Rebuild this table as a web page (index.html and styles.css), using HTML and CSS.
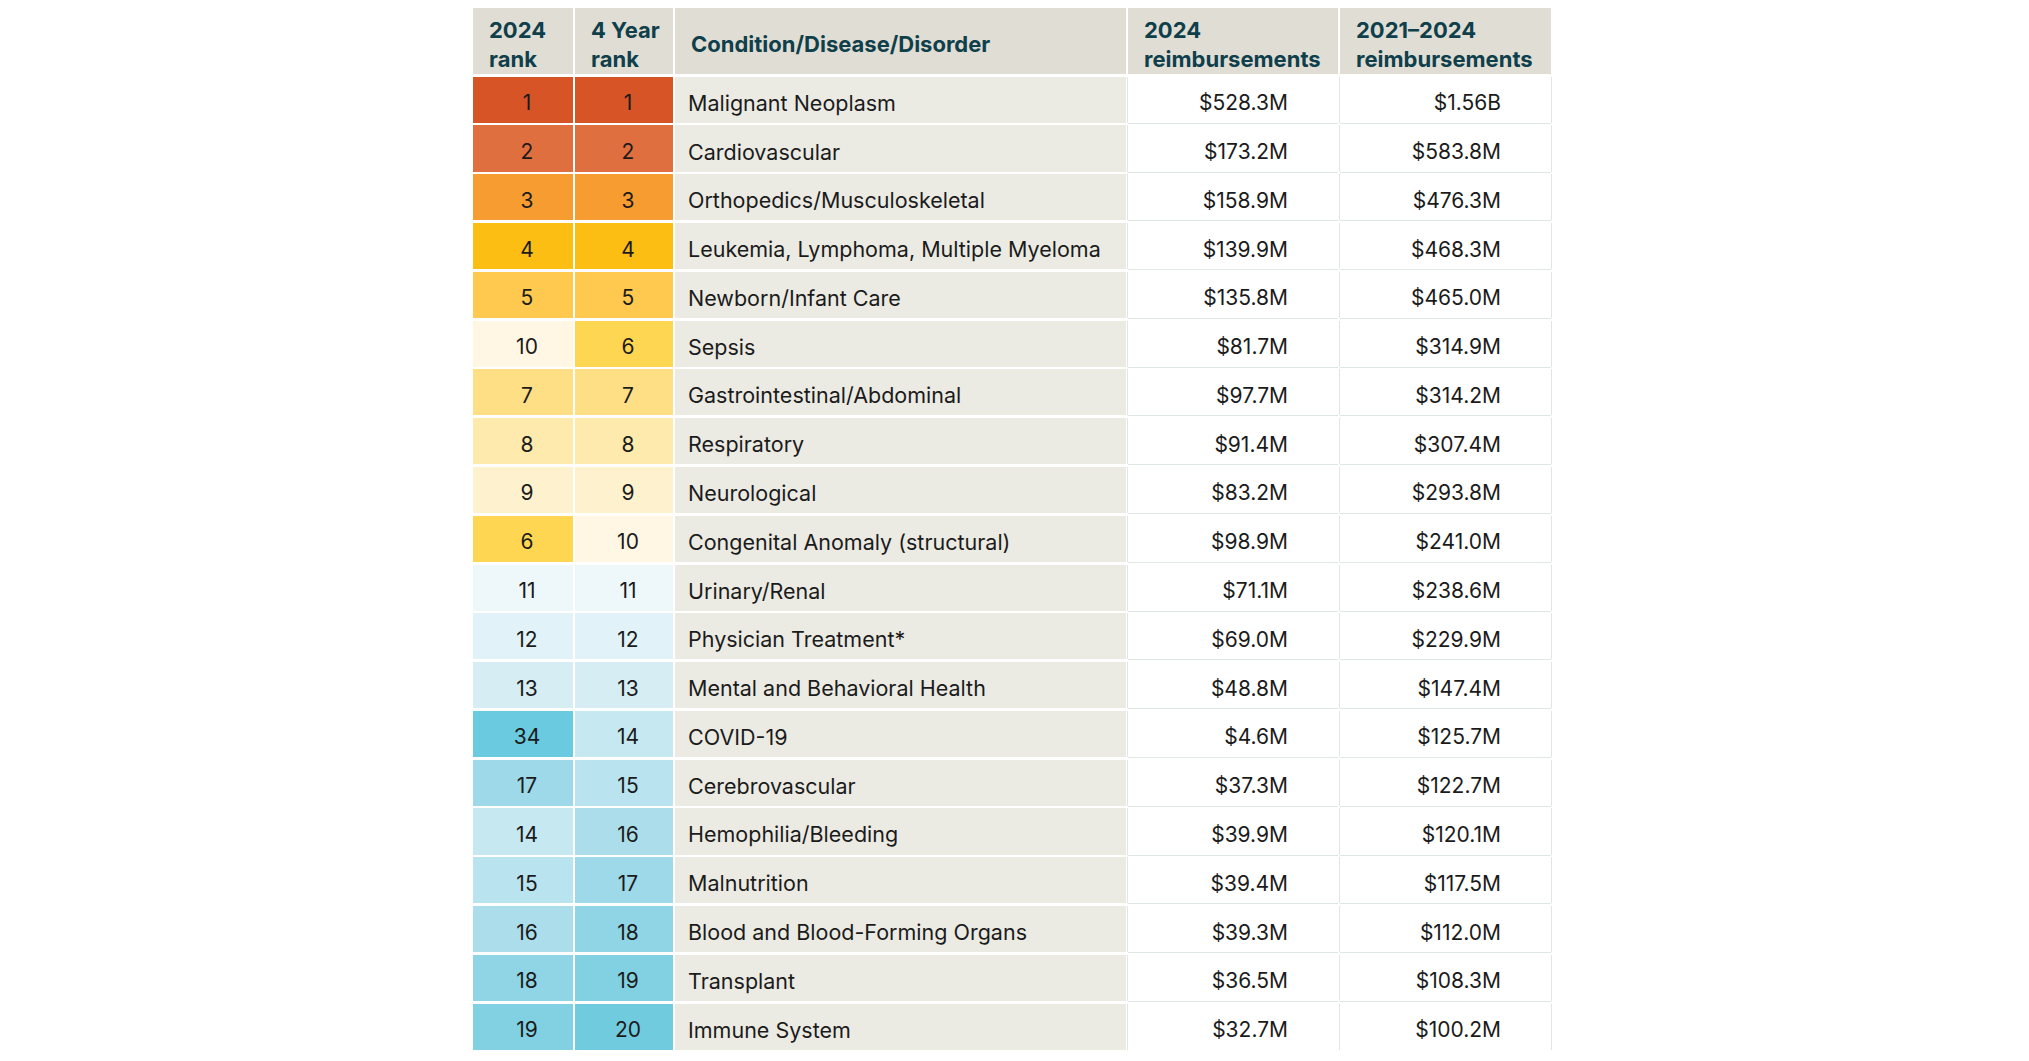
FILE: index.html
```html
<!DOCTYPE html>
<html lang="en">
<head>
<meta charset="utf-8">
<title>Top conditions by reimbursements</title>
<link rel="stylesheet" href="styles.css">
</head>
<body>
<div class="page">
  <div class="table">
    <div class="th th-rank">2024<br>rank</div>
    <div class="th th-rank">4 Year<br>rank</div>
    <div class="th th-cond">Condition/Disease/Disorder</div>
    <div class="th th-val">2024<br>reimbursements</div>
    <div class="th th-val">2021–2024<br>reimbursements</div>

    <div class="rank r1">1</div><div class="rank r1">1</div><div class="cond">Malignant Neoplasm</div><div class="val">$528.3M</div><div class="val last">$1.56B</div>
    <div class="rank r2">2</div><div class="rank r2">2</div><div class="cond">Cardiovascular</div><div class="val">$173.2M</div><div class="val last">$583.8M</div>
    <div class="rank r3">3</div><div class="rank r3">3</div><div class="cond">Orthopedics/Musculoskeletal</div><div class="val">$158.9M</div><div class="val last">$476.3M</div>
    <div class="rank r4">4</div><div class="rank r4">4</div><div class="cond">Leukemia, Lymphoma, Multiple Myeloma</div><div class="val">$139.9M</div><div class="val last">$468.3M</div>
    <div class="rank r5">5</div><div class="rank r5">5</div><div class="cond">Newborn/Infant Care</div><div class="val">$135.8M</div><div class="val last">$465.0M</div>
    <div class="rank r10">10</div><div class="rank r6">6</div><div class="cond">Sepsis</div><div class="val">$81.7M</div><div class="val last">$314.9M</div>
    <div class="rank r7">7</div><div class="rank r7">7</div><div class="cond">Gastrointestinal/Abdominal</div><div class="val">$97.7M</div><div class="val last">$314.2M</div>
    <div class="rank r8">8</div><div class="rank r8">8</div><div class="cond">Respiratory</div><div class="val">$91.4M</div><div class="val last">$307.4M</div>
    <div class="rank r9">9</div><div class="rank r9">9</div><div class="cond">Neurological</div><div class="val">$83.2M</div><div class="val last">$293.8M</div>
    <div class="rank r6">6</div><div class="rank r10">10</div><div class="cond">Congenital Anomaly (structural)</div><div class="val">$98.9M</div><div class="val last">$241.0M</div>
    <div class="rank r11">11</div><div class="rank r11">11</div><div class="cond">Urinary/Renal</div><div class="val">$71.1M</div><div class="val last">$238.6M</div>
    <div class="rank r12">12</div><div class="rank r12">12</div><div class="cond">Physician Treatment*</div><div class="val">$69.0M</div><div class="val last">$229.9M</div>
    <div class="rank r13">13</div><div class="rank r13">13</div><div class="cond">Mental and Behavioral Health</div><div class="val">$48.8M</div><div class="val last">$147.4M</div>
    <div class="rank r34">34</div><div class="rank r14">14</div><div class="cond">COVID-19</div><div class="val">$4.6M</div><div class="val last">$125.7M</div>
    <div class="rank r17">17</div><div class="rank r15">15</div><div class="cond">Cerebrovascular</div><div class="val">$37.3M</div><div class="val last">$122.7M</div>
    <div class="rank r14">14</div><div class="rank r16">16</div><div class="cond">Hemophilia/Bleeding</div><div class="val">$39.9M</div><div class="val last">$120.1M</div>
    <div class="rank r15">15</div><div class="rank r17">17</div><div class="cond">Malnutrition</div><div class="val">$39.4M</div><div class="val last">$117.5M</div>
    <div class="rank r16">16</div><div class="rank r18">18</div><div class="cond">Blood and Blood-Forming Organs</div><div class="val">$39.3M</div><div class="val last">$112.0M</div>
    <div class="rank r18">18</div><div class="rank r19">19</div><div class="cond">Transplant</div><div class="val">$36.5M</div><div class="val last">$108.3M</div>
    <div class="rank r19">19</div><div class="rank r20">20</div><div class="cond">Immune System</div><div class="val">$32.7M</div><div class="val last">$100.2M</div>
  </div>
</div>
</body>
</html>
```

FILE: styles.css
```css
html, body {
  margin: 0;
  padding: 0;
  background: #ffffff;
}

body {
  font-family: "Inter", "Liberation Sans", sans-serif;
  color: #1b1b1b;
}

.page {
  padding-top: 8px;
  padding-left: 473px;
}

.table {
  display: grid;
  grid-template-columns: 100px 98px 451px 210px 211px;
  grid-template-rows: 66px repeat(20, 46.1px);
  column-gap: 2px;
  row-gap: 2.7px;
  width: max-content;
}

.th {
  background: #e0ddd4;
  color: #0f3f4b;
  font-weight: 700;
  font-size: 22px;
  line-height: 29px;
  display: flex;
  align-items: center;
  padding: 7px 12px 0 16px;
  white-space: nowrap;
}

.rank {
  display: flex;
  align-items: center;
  justify-content: center;
  padding: 6px 0 0 8px;
  font-size: 21px;
  font-weight: 400;
}

.cond {
  background: #ebebe4;
  display: flex;
  align-items: center;
  padding: 6px 0 0 13px;
  font-size: 21.5px;
  white-space: nowrap;
}

.val {
  background: #ffffff;
  display: flex;
  align-items: center;
  justify-content: flex-end;
  padding: 6px 50px 0 0;
  font-size: 21px;
  box-shadow: -1px 0 0 #dfe6e6, 0 1px 0 #dfe6e6;
}

.val.last {
  box-shadow: 1px 0 0 #dfe6e6, -1px 0 0 #dfe6e6, 0 1px 0 #dfe6e6;
}

.r1 { background: #d65426; }
.r2 { background: #e06f3f; }
.r3 { background: #f79c31; }
.r4 { background: #fcbe12; }
.r5 { background: #fec94e; }
.r6 { background: #ffd651; }
.r7 { background: #fedf85; }
.r8 { background: #feeaad; }
.r9 { background: #fef1cd; }
.r10 { background: #fff6e4; }
.r11 { background: #eef8fb; }
.r12 { background: #e1f3f8; }
.r13 { background: #d5edf3; }
.r14 { background: #c6e8f1; }
.r15 { background: #b9e3ee; }
.r16 { background: #abdeea; }
.r17 { background: #9dd9e8; }
.r18 { background: #8fd5e6; }
.r19 { background: #81d1e3; }
.r20 { background: #70cbdf; }
.r34 { background: #6acadf; }
```
